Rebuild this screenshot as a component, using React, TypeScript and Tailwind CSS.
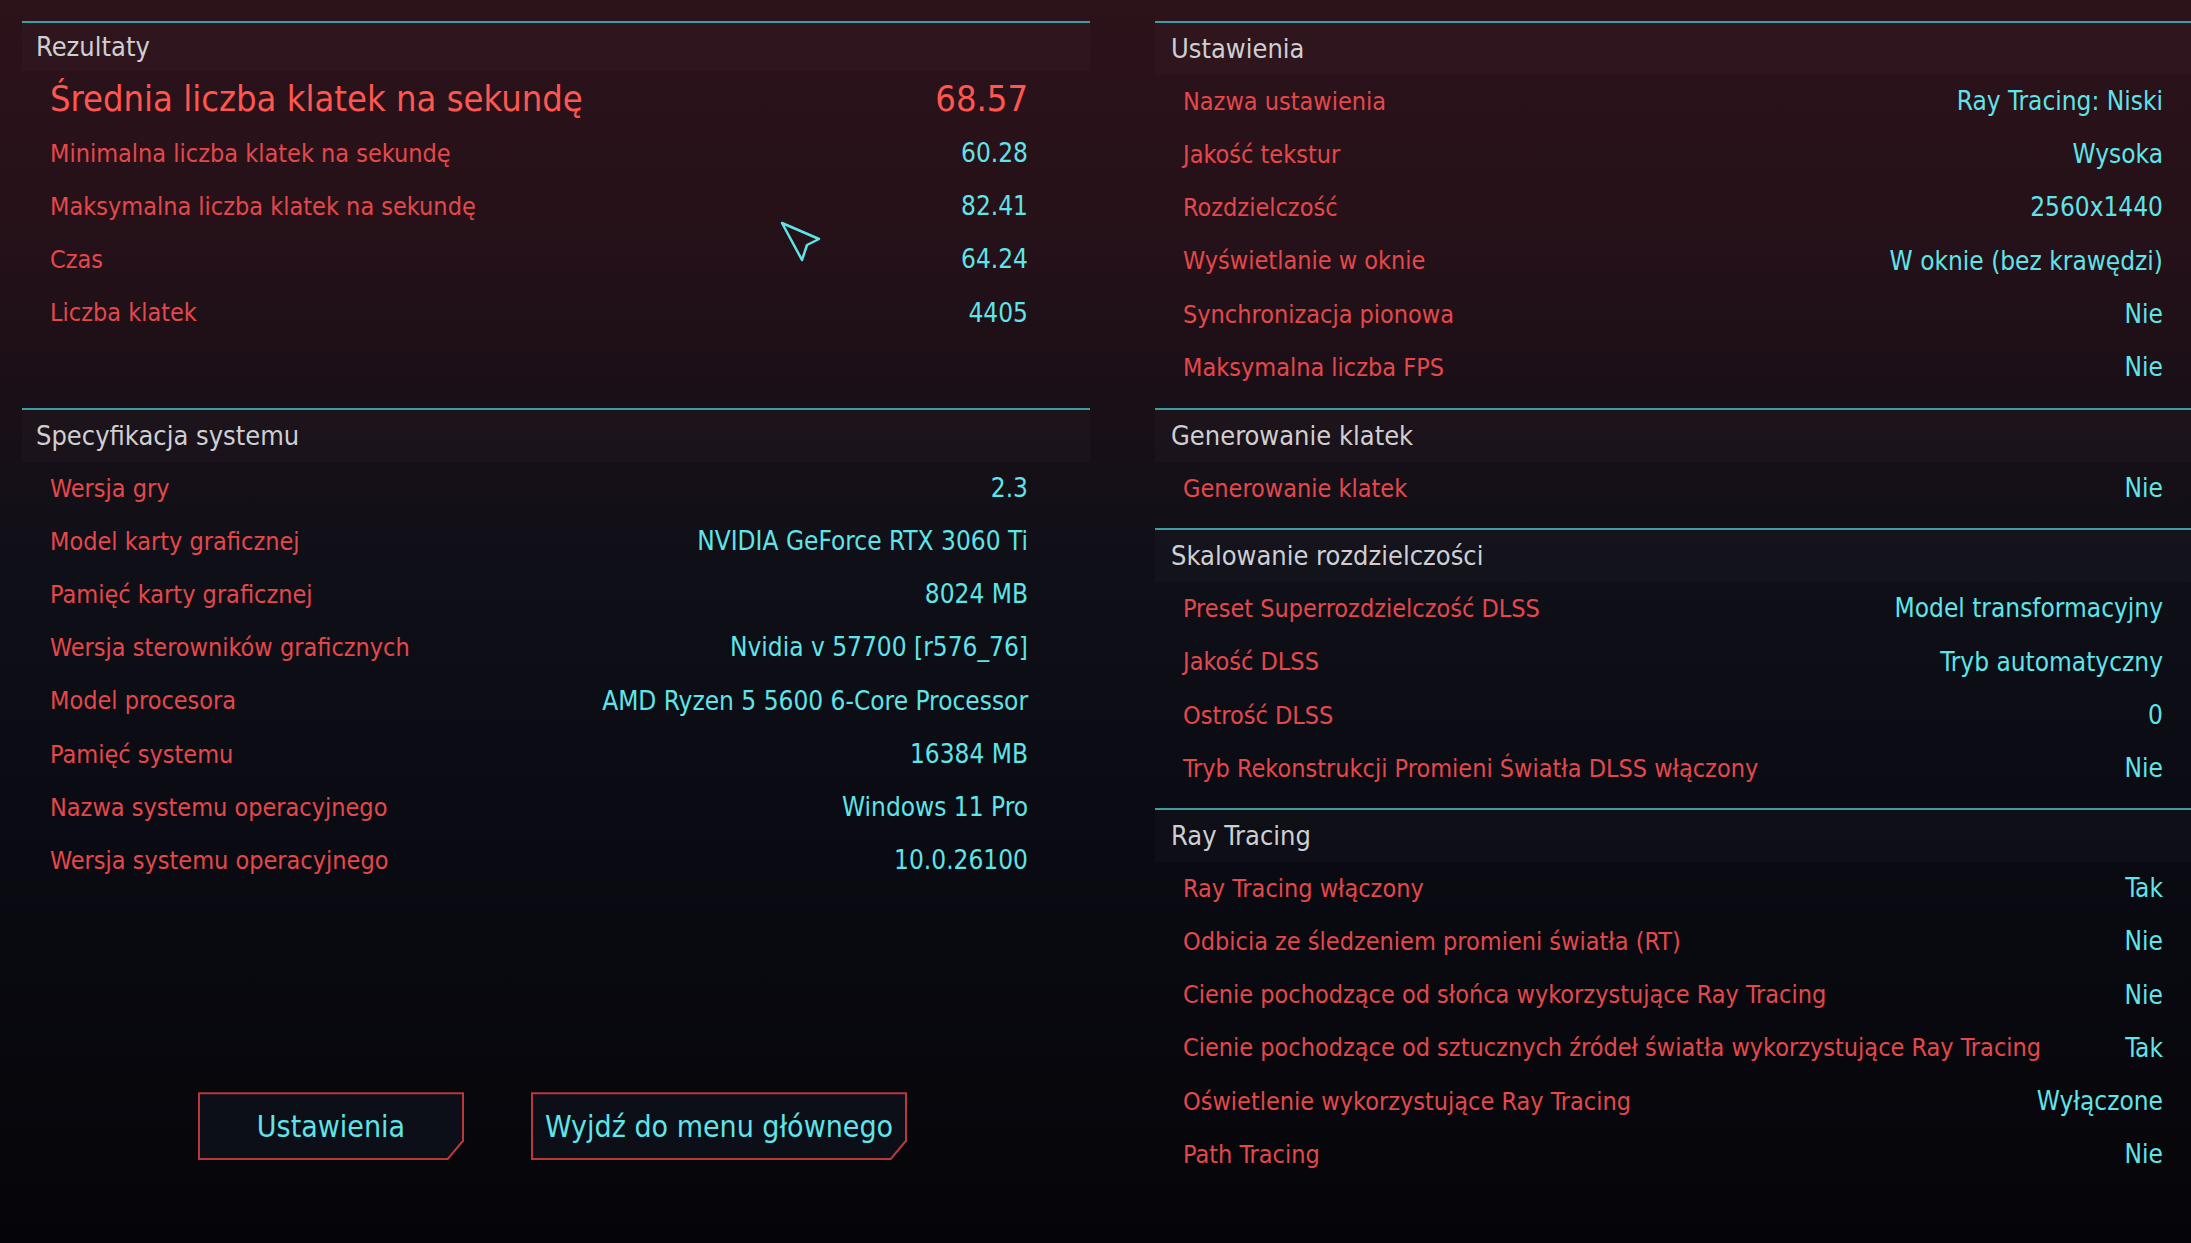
import React from 'react';

type Row = { label: string; value: string };

const FONT = "font-['Liberation_Sans_Narrow','DejaVu_Sans_Condensed','Liberation_Sans',sans-serif] [font-stretch:condensed]";

const results: Row[] = [
  { label: 'Minimalna liczba klatek na sekundę', value: '60.28' },
  { label: 'Maksymalna liczba klatek na sekundę', value: '82.41' },
  { label: 'Czas', value: '64.24' },
  { label: 'Liczba klatek', value: '4405' },
];

const system: Row[] = [
  { label: 'Wersja gry', value: '2.3' },
  { label: 'Model karty graficznej', value: 'NVIDIA GeForce RTX 3060 Ti' },
  { label: 'Pamięć karty graficznej', value: '8024 MB' },
  { label: 'Wersja sterowników graficznych', value: 'Nvidia v 57700 [r576_76]' },
  { label: 'Model procesora', value: 'AMD Ryzen 5 5600 6-Core Processor' },
  { label: 'Pamięć systemu', value: '16384 MB' },
  { label: 'Nazwa systemu operacyjnego', value: 'Windows 11 Pro' },
  { label: 'Wersja systemu operacyjnego', value: '10.0.26100' },
];

const sections: { title: string; rows: Row[]; pad: string }[] = [
  {
    title: 'Ustawienia',
    pad: 'pb-[14px]',
    rows: [
      { label: 'Nazwa ustawienia', value: 'Ray Tracing: Niski' },
      { label: 'Jakość tekstur', value: 'Wysoka' },
      { label: 'Rozdzielczość', value: '2560x1440' },
      { label: 'Wyświetlanie w oknie', value: 'W oknie (bez krawędzi)' },
      { label: 'Synchronizacja pionowa', value: 'Nie' },
      { label: 'Maksymalna liczba FPS', value: 'Nie' },
    ],
  },
  {
    title: 'Generowanie klatek',
    pad: 'pb-[13px]',
    rows: [{ label: 'Generowanie klatek', value: 'Nie' }],
  },
  {
    title: 'Skalowanie rozdzielczości',
    pad: 'pb-[13px]',
    rows: [
      { label: 'Preset Superrozdzielczość DLSS', value: 'Model transformacyjny' },
      { label: 'Jakość DLSS', value: 'Tryb automatyczny' },
      { label: 'Ostrość DLSS', value: '0' },
      { label: 'Tryb Rekonstrukcji Promieni Światła DLSS włączony', value: 'Nie' },
    ],
  },
  {
    title: 'Ray Tracing',
    pad: 'pb-0',
    rows: [
      { label: 'Ray Tracing włączony', value: 'Tak' },
      { label: 'Odbicia ze śledzeniem promieni światła (RT)', value: 'Nie' },
      { label: 'Cienie pochodzące od słońca wykorzystujące Ray Tracing', value: 'Nie' },
      { label: 'Cienie pochodzące od sztucznych źródeł światła wykorzystujące Ray Tracing', value: 'Tak' },
      { label: 'Oświetlenie wykorzystujące Ray Tracing', value: 'Wyłączone' },
      { label: 'Path Tracing', value: 'Nie' },
    ],
  },
];

function Header({ title, h = 'h-[52px]', pl = 'pl-[14px]' }: { title: string; h?: string; pl?: string }) {
  return (
    <div className={`${h} ${pl} flex items-center bg-white/[0.02] text-[27px] text-[#cfcfd2]`}>
      {title}
    </div>
  );
}

function DataRow({ row, pl, pr }: { row: Row; pl: string; pr: string }) {
  return (
    <div className={`h-[53.2px] ${pl} ${pr} flex items-center justify-between`}>
      <span className="text-[25px] text-[#e4484b]">{row.label}</span>
      <span className="text-[26px] text-[#5fe4e8]">{row.value}</span>
    </div>
  );
}

function CutButton({ label, w }: { label: string; w: string }) {
  return (
    <div className={`${w} h-[68px] bg-[#b8383c] [clip-path:polygon(0_0,100%_0,100%_72%,calc(100%-16px)_100%,0_100%)]`}>
      <div className="m-[2px] h-[64px] flex items-center justify-center bg-[#0c0e18] text-[30px] text-[#5fe4e8] [clip-path:polygon(0_0,100%_0,100%_72%,calc(100%-15px)_100%,0_100%)]">
        {label}
      </div>
    </div>
  );
}

export default function App() {
  return (
    <div
      className={`relative w-[2191px] h-[1243px] overflow-hidden bg-[linear-gradient(180deg,#2c1219_0%,#261119_18%,#1a0f17_32%,#0f0f18_46%,#0a0a12_70%,#050509_100%)] ${FONT}`}
    >
      <div className="flex pt-[21px]">
        {/* left column */}
        <div className="w-[1068px] ml-[22px] flex flex-col">
          <section className="border-t-2 border-[#3d9ea2] pb-[68px]">
            <Header title="Rezultaty" h="h-[48px]" />
            <div className="h-[56px] pl-[28px] pr-[62px] flex items-center justify-between text-[36px] text-[#ff5650]">
              <span>Średnia liczba klatek na sekundę</span>
              <span>68.57</span>
            </div>
            {results.map((r) => (
              <DataRow key={r.label} row={r} pl="pl-[28px]" pr="pr-[62px]" />
            ))}
          </section>
          <section className="border-t-2 border-[#3d9ea2]">
            <Header title="Specyfikacja systemu" />
            {system.map((r) => (
              <DataRow key={r.label} row={r} pl="pl-[28px]" pr="pr-[62px]" />
            ))}
          </section>
          <div className="mt-[205px] ml-[176px] flex gap-[67px]">
            <CutButton label="Ustawienia" w="w-[266px]" />
            <CutButton label="Wyjdź do menu głównego" w="w-[376px]" />
          </div>
        </div>

        {/* right column */}
        <div className="flex-1 ml-[65px] flex flex-col">
          {sections.map((s) => (
            <section key={s.title} className={`border-t-2 border-[#3d9ea2] ${s.pad}`}>
              <Header title={s.title} pl="pl-[16px]" />
              {s.rows.map((r) => (
                <DataRow key={r.label} row={r} pl="pl-[28px]" pr="pr-[28px]" />
              ))}
            </section>
          ))}
        </div>
      </div>

      {/* mouse cursor */}
      <svg className="absolute left-[780px] top-[221px]" width="42" height="42" viewBox="0 0 42 42" fill="none">
        <path d="M2 2 L39 18 L27 24 L22 39 Z" stroke="#5fe4e8" strokeWidth="2.5" strokeLinejoin="round" />
      </svg>
    </div>
  );
}
